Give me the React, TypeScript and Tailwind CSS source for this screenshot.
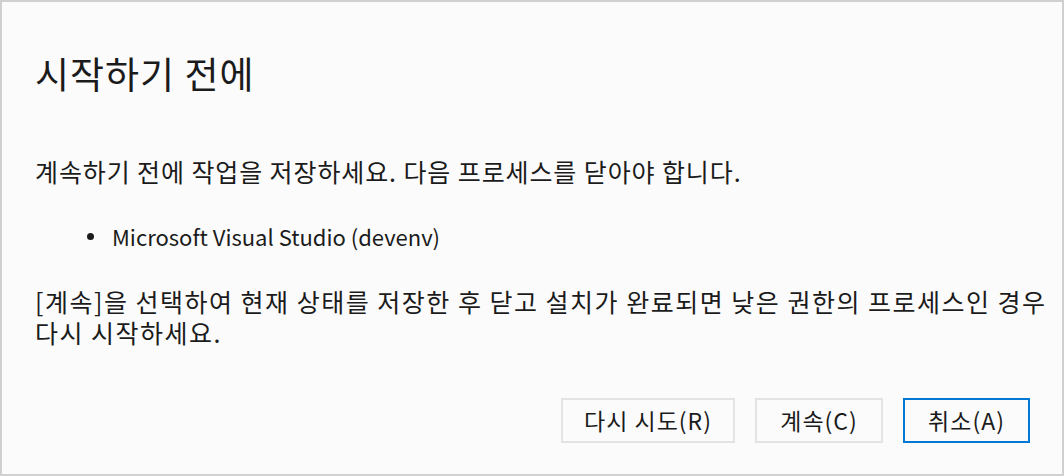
export default function App() {
  const font = { fontFamily: '"Noto Sans CJK KR", "Noto Sans", sans-serif' };
  return (
    <div
      className="w-[1064px] h-[476px] bg-[#fbfbfb] border-2 border-[#d0d0d0] text-[#1b1b1b] flex flex-col"
      style={font}
    >
      <div className="pl-[33px] pt-[47px] text-[37px] leading-[48px] tracking-[1px]">시작하기 전에</div>
      <div className="pl-[33px] pt-[58px] text-[25px] leading-[32px] tracking-[0.9px]">
        계속하기 전에 작업을 저장하세요. 다음 프로세스를 닫아야 합니다.
      </div>
      <ul className="pl-[85px] pt-[33px] text-[22px] leading-[32px]">
        <li className="flex items-center gap-[18px]">
          <span className="w-[7px] h-[7px] rounded-full bg-[#1b1b1b]" />
          <span>Microsoft Visual Studio (devenv)</span>
        </li>
      </ul>
      <div className="pl-[33px] pt-[34px] text-[25px] leading-[31px] tracking-[1.5px] whitespace-nowrap">
        <div className="h-[31px]">[계속]을 선택하여 현재 상태를 저장한 후 닫고 설치가 완료되면 낮은 권한의 프로세스인 경우</div>
        <div className="h-[31px]">다시 시작하세요.</div>
      </div>
      <div className="mt-auto mb-[31px] mr-[32px] flex justify-end gap-[20px] text-[23px] tracking-[1px]">
        <button className="w-[174px] h-[45px] border-2 border-[#e3e3e3] bg-[#fbfbfb]">다시 시도(R)</button>
        <button className="w-[128px] h-[45px] border-2 border-[#e3e3e3] bg-[#fbfbfb]">계속(C)</button>
        <button className="w-[127px] h-[45px] border-2 border-[#0078d4] bg-[#fbfbfb]">취소(A)</button>
      </div>
    </div>
  );
}
